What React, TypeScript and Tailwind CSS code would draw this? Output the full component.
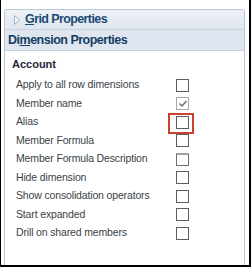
import React from "react";

const rows = [
  { label: "Apply to all row dimensions" },
  { label: "Member name", checked: true },
  { label: "Alias", highlight: true },
  { label: "Member Formula" },
  { label: "Member Formula Description", dim: true },
  { label: "Hide dimension" },
  { label: "Show consolidation operators" },
  { label: "Start expanded" },
  { label: "Drill on shared members" },
];

function Checkbox({ checked, dim }: { checked?: boolean; dim?: boolean }) {
  return (
    <span
      className={
        "flex w-[13px] h-[13px] items-center justify-center border bg-white " +
        (checked
          ? "border-[#a8a8a8] bg-[#f1f1f1]"
          : dim
          ? "border-[#6e6e6e] border-t-2 border-t-[#a0a0a0]"
          : "border-[#5e5e5e]")
      }
    >
      {checked && (
        <svg width="10" height="9" viewBox="0 0 10 9">
          <path d="M1.5 4.5 L4 7 L8.5 2" fill="none" stroke="#6a6a6a" strokeWidth="1.4" />
        </svg>
      )}
    </span>
  );
}

export default function App() {
  return (
    <div
      className="w-[251px] h-[267px] flex flex-col bg-white border-l border-r-2 border-b-2 border-black pt-[9px] pl-[3px] pr-[4px]"
      style={{ fontFamily: "'Liberation Sans', Arial, sans-serif" }}
    >
      <div className="flex-1 flex flex-col border border-b-0 border-[#b9c6d6] rounded-t-[3px] overflow-hidden">
        {/* GRID PROPERTIES */}
        <div className="h-[20px] flex items-center gap-[5px] pl-[9px] bg-gradient-to-b from-[#eef2f7] to-[#dfe6ee] border-b border-[#cbd5e1]">
          <svg width="6" height="10" viewBox="0 0 6 10">
            <path d="M0.5 0.5 L5.5 5 L0.5 9.5 Z" fill="#f4f7fb" stroke="#9fb2c9" strokeWidth="1" />
          </svg>
          <span className="text-[12.5px] font-bold text-[#1b4a73] tracking-[-0.6px]">
            <span className="underline">G</span>rid Properties
          </span>
        </div>

        {/* DIMENSION PROPERTIES */}
        <div className="h-[21px] flex items-center pl-[3px] bg-[#dfe6ef] border-b border-[#c5d0dc]">
          <span className="text-[12.5px] font-bold text-[#143e66] tracking-[-0.5px]">
            Di<span className="underline">m</span>ension Properties
          </span>
        </div>

        {/* ACCOUNT */}
        <div className="pt-[6px] pl-[7px] h-[20px] flex items-center text-[11px] font-bold text-[#1d2733]">
          Account
        </div>

        <div className="pt-[5px] flex flex-col">
          {rows.map((r, i) => (
            <div key={i} className="h-[18.5px] flex items-center pl-[11px]">
              <span className="w-[160px] text-[10.5px] tracking-[-0.15px] text-[#3a3f47]">{r.label}</span>
              <span className="relative">
                <Checkbox checked={r.checked} dim={r.dim} />
                {r.highlight && (
                  <span className="absolute -left-[8px] -top-[3px] w-[26px] h-[21px] border-2 border-[#c9412f]" />
                )}
              </span>
            </div>
          ))}
        </div>
      </div>
    </div>
  );
}
